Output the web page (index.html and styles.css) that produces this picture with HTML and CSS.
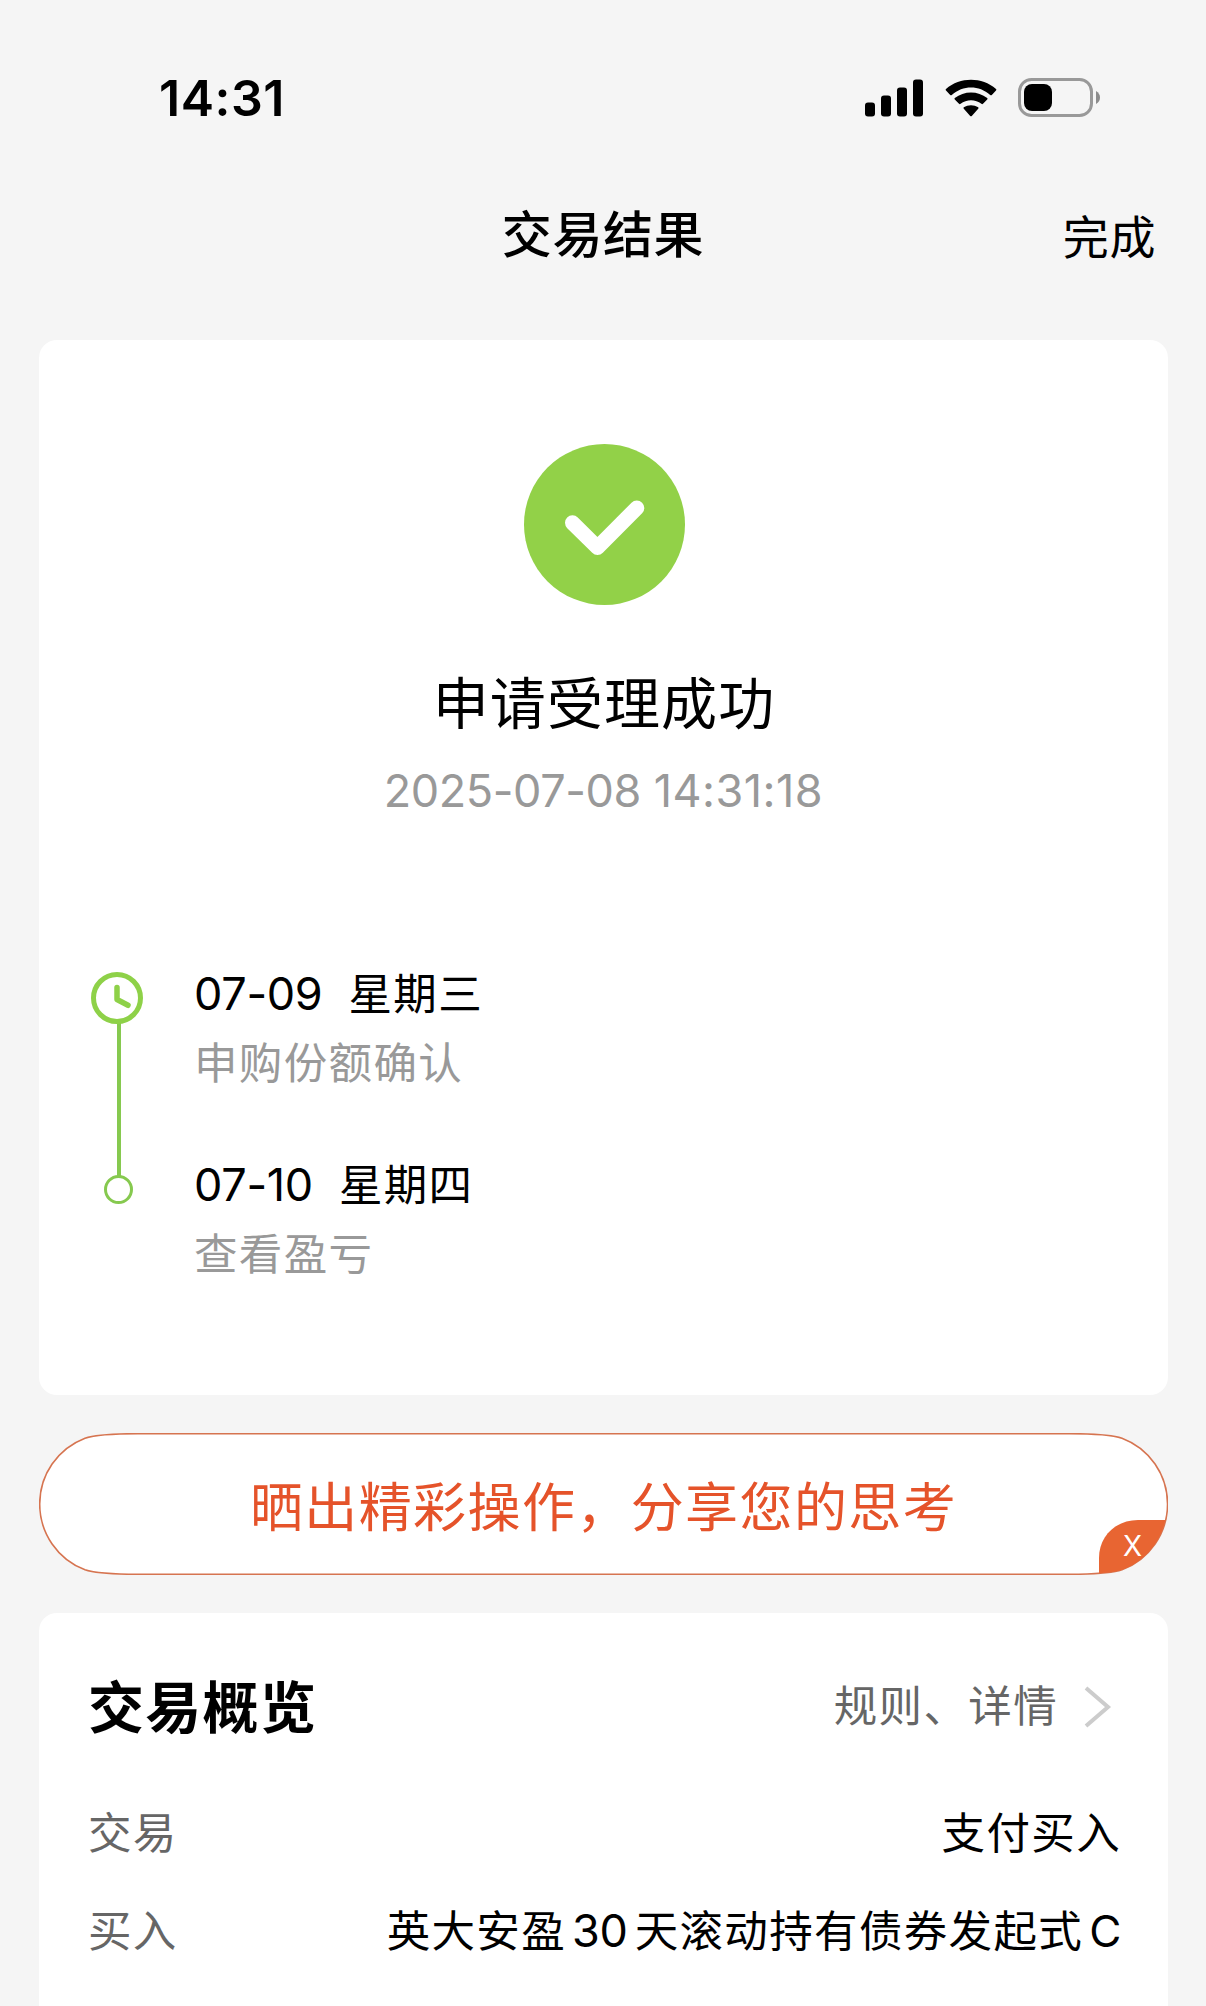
FILE: index.html
```
<!DOCTYPE html>
<html lang="zh-CN">
<head>
    <meta charset="UTF-8">
    <title>交易结果</title>
    <link rel="stylesheet" href="styles.css">
</head>
<body>
    <div class="status">
        <span class="time">14:31</span>
        <div class="status-icons">
            <svg class="signal" width="58" height="38" viewBox="0 0 58 38">
                <rect x="0" y="23.500" width="10" height="14" rx="3"/>
                <rect x="16" y="16.500" width="10" height="21" rx="3"/>
                <rect x="32" y="8.500" width="10" height="29" rx="3"/>
                <rect x="48" y="0.500" width="10" height="37" rx="3"/>
            </svg>
            <svg class="wifi" width="52" height="38" viewBox="0 0 52 38">
                <path d="M1 11.5 Q0.2 10.8 1 10 C15 -2.3 37 -2.3 51 10 Q51.8 10.8 51 11.5 L46.8 15.9 Q46 16.6 45.2 15.9 C34 6 18 6 6.8 15.9 Q6 16.6 5.2 15.9 Z"/>
                <path d="M9.8 20.6 Q9 19.8 9.8 19.1 C19 11.6 33 11.6 42.2 19.1 Q43 19.8 42.2 20.6 L38 24.8 Q37.2 25.5 36.4 24.8 C30.5 20 21.5 20 15.6 24.8 Q14.8 25.5 14 24.8 Z"/>
                <path d="M18.8 29.8 Q18 29 18.8 28.3 C23 25.4 29 25.4 33.2 28.3 Q34 29 33.2 29.8 L26.8 36.9 Q26 37.7 25.2 36.9 Z"/>
            </svg>
            <svg class="battery" width="83" height="40" viewBox="0 0 83 40">
                <rect x="1.5" y="1.5" width="72" height="36" rx="12" fill="none" stroke="#999" stroke-width="3"/>
                <rect x="6" y="6" width="28" height="27" rx="8"/>
                <path d="M78 13 Q82 15.500 82 19.500 Q82 23.500 78 26 Z" fill="#8c8c8c"/>
            </svg>
        </div>
    </div>

    <div class="navbar">
        <h1>交易结果</h1>
        <a class="done">完成</a>
    </div>

    <div class="card result">
        <svg class="ok" width="161" height="161" viewBox="0 0 161 161">
            <circle cx="80.500" cy="80.500" r="80.500" fill="#92d148"/>
            <path d="M48.500 78.800 L73.500 103.500 L112.800 64" fill="none" stroke="#fff" stroke-width="15" stroke-linecap="round" stroke-linejoin="round"/>
        </svg>
        <h2>申请受理成功</h2>
        <p class="datetime"><span class="date">2025-07-08</span> <span class="clock">14:31:18</span></p>

        <div class="timeline">
            <svg class="rail" width="54" height="234" viewBox="0 0 54 234">
                <rect x="26" y="50" width="4" height="154" fill="#86c94f"/>
                <circle cx="26" cy="26" r="23.500" fill="#fff" stroke="#8ed148" stroke-width="5"/>
                <path d="M26 15.500 V27.500 L37 33.300" fill="none" stroke="#8ed148" stroke-width="5.500" stroke-linecap="round" stroke-linejoin="round"/>
                <circle cx="27.500" cy="217.500" r="13" fill="#fff" stroke="#86c94f" stroke-width="3"/>
            </svg>
            <div class="steps">
                <div class="step">
                    <p><span class="num">07-09</span><span class="week">星期三</span></p>
                    <p class="note">申购份额确认</p>
                </div>
                <div class="step">
                    <p><span class="num">07-10</span><span class="week">星期四</span></p>
                    <p class="note">查看盈亏</p>
                </div>
            </div>
        </div>
    </div>

    <div class="share">
        <svg class="share-bg" width="1129" height="142" viewBox="0 0 1129 142">
            <path d="M0.700 71 A70.300 70.300 0 0 1 46 5.200 C56 1.800 73 0.700 99 0.700 H1030 C1056 0.700 1073 1.800 1083 5.200 A70.300 70.300 0 0 1 1083 136.800 C1073 140.200 1056 141.300 1030 141.300 H99 C73 141.300 56 140.200 46 136.800 A70.300 70.300 0 0 1 0.700 71 Z" fill="#fff" stroke="#d67450" stroke-width="1.600"/>
            <path d="M1060 140.300 V125 C1060 103 1077 87 1099 87 H1126.500 C1121.500 109 1106 128.500 1083 136.800 C1077 138.800 1070 139.900 1060 140.300 Z" fill="#e86532"/>
        </svg>
        <span class="share-text">晒出精彩操作，分享您的思考</span>
        <span class="close">X</span>
    </div>

    <div class="card overview">
        <div class="overview-head">
            <h3>交易概览</h3>
            <a class="more">规则、详情
                <svg class="arrow" width="28" height="42" viewBox="0 0 28 42"><path d="M2 2 L24 21 L2 40" fill="none" stroke="#ccc" stroke-width="4"/></svg>
            </a>
        </div>
        <div class="row">
            <span class="label">交易</span>
            <span class="value">支付买入</span>
        </div>
        <div class="row">
            <span class="label">买入</span>
            <span class="value">英大安盈<span class="num days">30</span>天滚动持有债券发起式<span class="num share-class">C</span></span>
        </div>
    </div>
</body>
</html>
```
FILE: styles.css
```
*{
    box-sizing: border-box;
    margin: 0;
    padding: 0;
}
body{
    width: 1206px;
    height: 2006px;
    overflow: hidden;
    display: flex;
    flex-direction: column;
    background-color: #f5f5f5;
    color: #000;
    font-family: "Noto Sans CJK SC", sans-serif;
    font-size: 43.5px;
    letter-spacing: 1.35px;
}
svg{
    display: block;
    flex-shrink: 0;
}
.status{
    height: 196px;
    padding: 0 105px 0 159px;
    display: flex;
    align-items: center;
    justify-content: space-between;
}
.time{
    font-family: Inter, sans-serif;
    font-size: 50px;
    font-weight: 600;
    letter-spacing: 0.5px;
}
.status-icons{
    display: flex;
    align-items: center;
}
.wifi{
    margin: 0 21px 0 22px;
}
.navbar{
    height: 144px;
    padding: 0 50px;
    display: grid;
    grid-template-columns: 1fr auto 1fr;
    align-items: start;
}
.navbar h1{
    grid-column: 2;
    font-size: 50px;
    font-weight: 500;
    line-height: 70px;
    letter-spacing: 0.6px;
}
.done{
    justify-self: end;
    font-size: 46px;
    line-height: 77px;
    letter-spacing: 0.6px;
}
.card{
    margin: 0 38px 0 39px;
    background-color: #fff;
    border-radius: 18px;
}
.result{
    height: 1055px;
    padding-top: 104px;
    flex-shrink: 0;
}
.ok{
    margin: 0 auto;
    position: relative;
    left: 1px;
}
.result h2{
    margin-top: 60px;
    padding-left: 1px;
    text-align: center;
    font-size: 56px;
    font-weight: 400;
    line-height: 70px;
    letter-spacing: 1.1px;
}
.datetime{
    margin-top: 25px;
    text-align: center;
    color: #999;
    font-family: Inter, sans-serif;
    font-size: 45px;
    line-height: 61px;
    letter-spacing: 0;
}
.date{
    letter-spacing: -0.4px;
}
.clock{
    letter-spacing: 0.5px;
}
.timeline{
    margin-top: 135px;
    padding-left: 52px;
    display: flex;
}
.rail{
    margin-top: 16px;
}
.steps{
    margin: 1px 0 0 49px;
}
.step{
    height: 191px;
    line-height: 69px;
}
.num{
    font-family: Inter, sans-serif;
    font-size: 45px;
    line-height: 1;
    letter-spacing: -0.3px;
}
.week{
    margin-left: 26px;
}
.note{
    color: #999;
}
.share{
    position: relative;
    height: 142px;
    margin: 38px 38px 38px 39px;
    display: flex;
    justify-content: center;
    flex-shrink: 0;
}
.share-bg{
    position: absolute;
    top: 0;
    left: 0;
}
.share-text{
    position: relative;
    color: #e5532a;
    font-size: 53px;
    line-height: 143px;
    letter-spacing: 1.4px;
}
.close{
    position: absolute;
    left: 1084px;
    top: 95px;
    color: #fff;
    font-family: Inter, sans-serif;
    font-size: 28px;
    font-weight: 400;
    line-height: 36px;
    letter-spacing: 0;
}
.overview{
    flex: 1;
    padding: 50px 47px 0 49px;
    border-radius: 18px 18px 0 0;
}
.overview-head{
    height: 80px;
    margin-bottom: 38px;
    display: flex;
    align-items: center;
    justify-content: space-between;
}
.overview h3{
    font-size: 56px;
    font-weight: 700;
    letter-spacing: 1.3px;
}
.more{
    padding-right: 9px;
    display: flex;
    align-items: center;
    gap: 26px;
    color: #666;
}
.arrow{
    margin-top: 7px;
}
.row{
    height: 98px;
    line-height: 99px;
    display: flex;
    justify-content: space-between;
}
.label{
    color: #666;
}
.days{
    margin: 0 7px 0 6px;
}
.share-class{
    margin: 0 0 0 6px;
    font-size: 44px;
}
```
